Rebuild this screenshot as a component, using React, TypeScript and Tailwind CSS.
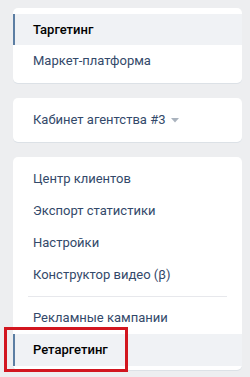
import React from "react";

type Item = { label: string; active?: boolean; marked?: boolean };

const Row = ({ label, active, marked, h = "h-[31px]" }: Item & { h?: string }) => (
  <div
    className={
      "relative flex items-center pl-[20px] text-[13px] " +
      h +
      (active ? " bg-[#f0f2f5] font-medium text-black" : " text-[#33496a]")
    }
  >
    {active && <div className="absolute left-0 top-0 h-full w-[2px] bg-[#5c7ea3]" />}
    <span>{label}</span>
    {marked && (
      <div className="absolute left-[-9px] top-[-7px] h-[45px] w-[124px] border-[3px] border-[#d2161f]" />
    )}
  </div>
);

export default function App() {
  return (
    <div
      className="min-h-[377px] bg-[#edeef0] pl-[13px] pr-[8px] pt-[8px]"
      style={{ fontFamily: "Roboto, 'Liberation Sans', sans-serif" }}
    >
      <div className="rounded-[5px] bg-white pb-[7px] pt-[6px] shadow-[0_1px_0_#dce1e6]">
        <Row label="Таргетинг" active />
        <Row label="Маркет-платформа" />
      </div>

      <div className="mt-[15px] flex h-[44px] items-center rounded-[5px] bg-white pl-[20px] text-[13px] text-[#33496a] shadow-[0_1px_0_#dce1e6]">
        <span>Кабинет агентства #3</span>
        <svg className="ml-[6px] mt-[1px]" width="8" height="5" viewBox="0 0 8 5">
          <path d="M0 0h8L4 4.5z" fill="#aab3be" />
        </svg>
      </div>

      <div className="mt-[15px] rounded-[5px] bg-white pb-[4px] pt-[6px] shadow-[0_1px_0_#dce1e6]">
        <Row label="Центр клиентов" h="h-[32px]" />
        <Row label="Экспорт статистики" h="h-[32px]" />
        <Row label="Настройки" h="h-[32px]" />
        <Row label="Конструктор видео (β)" h="h-[32px]" />
        <div className="mx-[15px] my-[5px] h-px bg-[#e7e8ec]" />
        <Row label="Рекламные кампании" h="h-[32px]" />
        <Row label="Ретаргетинг" active marked h="h-[32px]" />
      </div>
    </div>
  );
}
